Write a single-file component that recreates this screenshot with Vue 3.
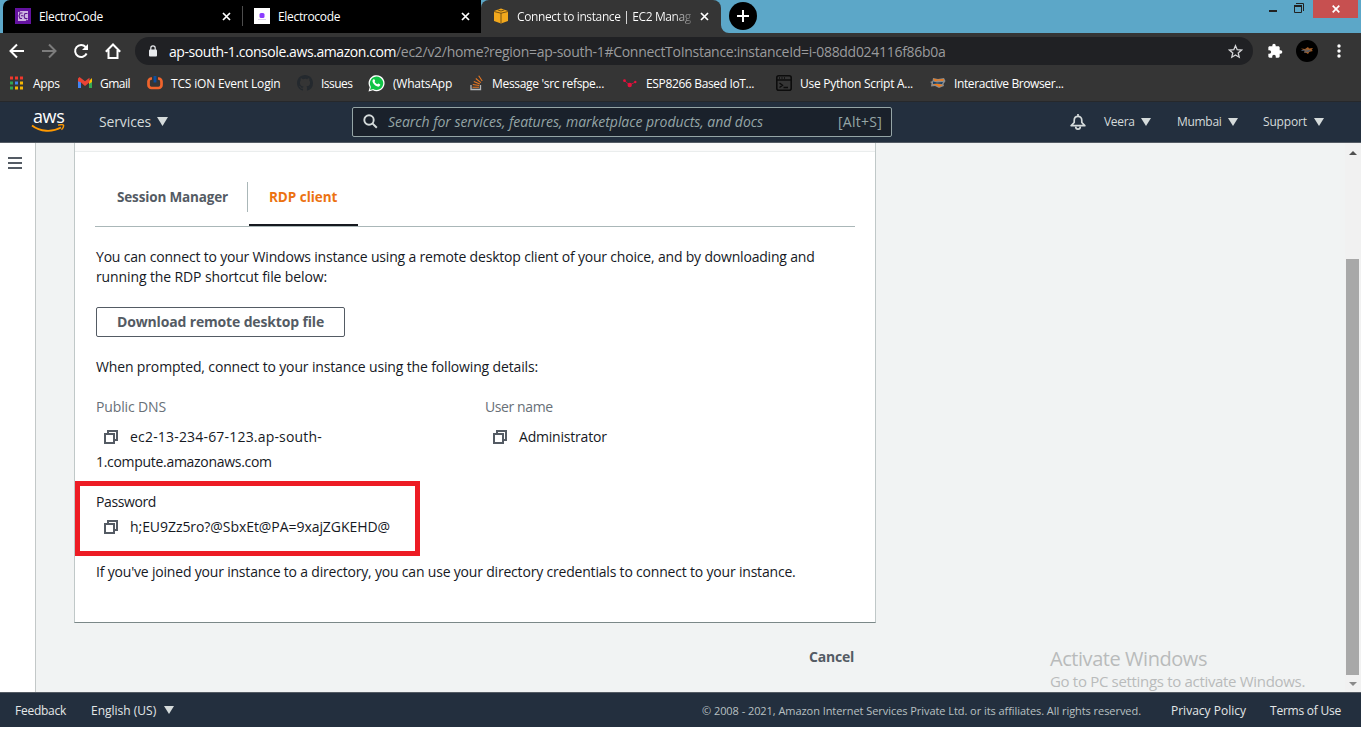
<script setup>
const menus = [
  { name: 'Veera', cls: 'm-user' },
  { name: 'Mumbai', cls: 'm-region' },
  { name: 'Support', cls: 'm-support' },
]
</script>

<template>
  <div class="screen">
    <div class="tabstrip">
      <div class="tab t1">
        <svg class="fav" width="16" height="16" viewBox="0 0 16 16"><rect width="16" height="16" fill="#6412a0" /><rect x="3" y="3" width="10" height="10" fill="#cdb2e0" /><path d="M7.500 5H5L4 8l1 2.500h2M6 7.700h2M12.500 5.500H10L9 8l1 2.500h2.500M3 3l2 1M11 12l2 1" fill="none" stroke="#5a148c" stroke-width="1.100" /></svg>
        <span class="tt tt1">ElectroCode</span>
        <svg class="x" width="9" height="9" viewBox="0 0 9 9"><path d="M1 1l7 7M8 1L1 8" /></svg>
      </div>
      <i class="sep"></i>
      <div class="tab t2">
        <svg class="fav" width="16" height="16" viewBox="0 0 16 16"><rect width="16" height="16" fill="#fff" /><rect x="5.500" y="5" width="5" height="5" rx="1.500" fill="#8b3dff" /><path d="M4 11.500h8" stroke="#dccdf0" /></svg>
        <span class="tt tt1">Electrocode</span>
        <svg class="x" width="9" height="9" viewBox="0 0 9 9"><path d="M1 1l7 7M8 1L1 8" /></svg>
      </div>
      <div class="tab t3">
        <svg class="fav" width="16" height="16" viewBox="0 0 16 16"><path d="M1 3l7-2.500L15 3v10l-7 2.500L1 13z" fill="#f2a81d" /><path d="M1 3.500l7 1.700 7-1.700M8 5v10M4.500 1.800L8 3l3.500-1.200" fill="none" stroke="#6b4a12" stroke-width=".9" /></svg>
        <span class="tt tt3">Connect to instance | EC2 Manag</span>
        <svg class="x" width="9" height="9" viewBox="0 0 9 9"><path d="M1 1l7 7M8 1L1 8" /></svg>
      </div>
      <svg class="flare" width="8" height="8"><path d="M0 0a8 8 0 0 0 8 8H0z" fill="#353535" /></svg>
      <div class="newtab"><svg width="12" height="12" viewBox="0 0 12 12"><path d="M6 0v12M0 6h12" stroke="#fff" stroke-width="2" /></svg></div>
      <div class="winctl">
        <svg class="min" width="8" height="2"><rect width="8" height="2" fill="#222" /></svg>
        <svg class="max" width="10" height="10" viewBox="0 0 10 10"><path d="M2 .5h7.500V8" fill="none" stroke="#222" /><path d="M.5 3h7v6.500h-7z" fill="none" stroke="#222" /><path d="M0 3h8" stroke="#222" stroke-width="2" /></svg>
        <div class="close"><svg width="8" height="8" viewBox="0 0 8 8"><path d="M.7.700l6.600 6.600M7.300.700L.7 7.300" stroke="#fff" stroke-width="1.700" /></svg></div>
      </div>
    </div>

    <div class="toolbar">
      <svg class="nv" width="16" height="16" viewBox="0 0 16 16"><path d="M15 8H2M8 1.500L1.500 8 8 14.500" fill="none" stroke="#fff" stroke-width="2" /></svg>
      <svg class="nv" width="16" height="16" viewBox="0 0 16 16"><path d="M1 8h13M8 1.500L14.500 8 8 14.500" fill="none" stroke="#7c7c7c" stroke-width="2" /></svg>
      <svg class="nv" width="16" height="16" viewBox="0 0 16 16"><path d="M13.600 10.500A6 6 0 1 1 12.600 4" fill="none" stroke="#fff" stroke-width="2" /><path d="M15 1v6H9z" fill="#fff" /></svg>
      <svg class="nv" width="16" height="16" viewBox="0 0 16 16"><path d="M3.500 7v8h9V7M0.800 8.700L8 1.500l7.200 7.200" fill="none" stroke="#fff" stroke-width="2" /></svg>
      <div class="omni">
        <svg width="8" height="12" viewBox="0 0 8 12"><rect y="4.500" width="8" height="7" rx="1" fill="#e8eaed" /><path d="M1.800 5V3a2.200 2.200 0 0 1 4.400 0v2" fill="none" stroke="#e8eaed" stroke-width="1.200" /></svg>
        <span class="host">ap-south-1.console.aws.amazon.com</span><span class="path">/ec2/v2/home?region=ap-south-1#ConnectToInstance:instanceId=i-088dd024116f86b0a</span>
        <svg class="star" width="15" height="15" viewBox="0 0 15 15"><path d="M7.500 1.700l1.700 4 4.300.4-3.300 2.800 1 4.300-3.700-2.300-3.700 2.300 1-4.300L1.500 6.100l4.300-.4z" fill="none" stroke="#d5d6d8" stroke-width="1.300" /></svg>
      </div>
      <svg class="puzzle" width="16" height="16" viewBox="0 0 24 24"><path d="M20.500 11H19V7c0-1.100-.9-2-2-2h-4V3.500a2.500 2.500 0 0 0-5 0V5H4c-1.100 0-2 .9-2 2v3.800h1.500a2.700 2.700 0 0 1 0 5.400H2V20c0 1.100.9 2 2 2h3.800v-1.500a2.700 2.700 0 0 1 5.400 0V22H17c1.100 0 2-.9 2-2v-4h1.500a2.500 2.500 0 0 0 0-5z" fill="#fff" /></svg>
      <svg class="avatar" width="22" height="22" viewBox="0 0 22 22"><circle cx="11" cy="11" r="11" fill="#000" /><path d="M5 8.500l4 .5 3-2 1 1.500 4-.5-1.500 2L17 11l-3.500.7L12 14l-1.500-1L8 12.500 9 11z" fill="#a95f24" /><path d="M5.500 10.500l4-.5 5 .5M8 12l5-.5" fill="none" stroke="#4a5c70" /></svg>
      <svg class="dots" width="4" height="14" viewBox="0 0 4 14"><g fill="#fff"><circle cx="2" cy="2" r="1.700" /><circle cx="2" cy="7" r="1.700" /><circle cx="2" cy="12" r="1.700" /></g></svg>
    </div>

    <div class="bookmarks">
      <div class="bm b1"><svg width="14" height="14" viewBox="0 0 14 14"><path d="M0 .5h3v3H0zM5 .5h3v3H5zM10 .5h3v3h-3z" fill="#f0382c" /><path d="M0 5.500h3v3H0zM0 10.500h3v3H0z" fill="#2fa552" /><path d="M5 5.500h3v3H5z" fill="#3f83ee" /><path d="M10 5.500h3v3h-3zM5 10.500h3v3H5zM10 10.500h3v3h-3z" fill="#f6b704" /></svg><span>Apps</span></div>
      <div class="bm b2"><svg width="16" height="12" viewBox="0 0 16 12"><path d="M1 2v9h3V4z" fill="#4285f4" /><path d="M12 4v7h3V2z" fill="#34a853" /><path d="M12 4l3-3v4l-3 2z" fill="#fbbc04" /><path d="M1 1.500L2.500 0 8 4.300 12.500.8v4.500L8 9 4 5.500 1 4.200z" fill="#ea4335" /></svg><span>Gmail</span></div>
      <div class="bm b3"><svg width="16" height="14" viewBox="0 0 16 14"><path d="M5 2.500H4.500a3 3 0 0 0-3 3V9a3 3 0 0 0 3 3h7a3 3 0 0 0 3-3V5.500a3 3 0 0 0-3-3H11" fill="none" stroke="#f0642c" stroke-width="2.700" /><path d="M8 0v6.500" stroke="#0b4ea2" stroke-width="2.800" /></svg><span>TCS iON Event Login</span></div>
      <div class="bm b4"><svg width="16" height="16" viewBox="0 0 16 16"><path fill="#24292e" d="M8 0C3.580 0 0 3.580 0 8c0 3.540 2.290 6.530 5.470 7.590.4.070.550-.170.550-.380 0-.190-.010-.820-.010-1.490-2.010.370-2.530-.490-2.690-.940-.090-.230-.480-.940-.820-1.130-.280-.150-.680-.520-.010-.530.630-.010 1.080.580 1.230.820.720 1.210 1.870.870 2.330.660.070-.520.280-.870.510-1.070-1.780-.2-3.640-.890-3.640-3.950 0-.870.310-1.590.820-2.150-.080-.2-.360-1.020.080-2.120 0 0 .670-.210 2.200.820A7.600 7.600 0 0 1 8 3.870c.680 0 1.360.090 2 .270 1.530-1.040 2.200-.820 2.200-.820.440 1.100.160 1.920.080 2.120.510.560.820 1.270.820 2.150 0 3.070-1.870 3.750-3.650 3.950.290.250.540.730.540 1.480 0 1.070-.010 1.930-.010 2.200 0 .210.150.460.550.380A8 8 0 0 0 16 8c0-4.420-3.580-8-8-8z" /></svg><span>Issues</span></div>
      <div class="bm b5"><svg width="17" height="17" viewBox="0 0 17 17"><path d="M.5 16.500l1.200-4.200A8 8 0 1 1 4.900 15.300z" fill="#fff" /><path d="M2 15l.9-3.100A6.700 6.700 0 1 1 5.200 14.100z" fill="#10c446" /><path d="M5.200 4.500c1-.8 1.400-.3 2 1.500-.7.800-.7.900 0 1.700.8.900 1.400 1.400 2.200 1.600.7-.9 1-1 2.800.3.300.4-.4 1.700-1.300 2-1.700.5-5-1.700-6.200-4.400-.4-1-.2-2 .5-2.700z" fill="#fff" /></svg><span>(WhatsApp</span></div>
      <div class="bm b6"><svg width="13" height="16" viewBox="0 0 13 16"><path d="M1 10v4.500h9.500V10" fill="none" stroke="#b4b7ba" stroke-width="1.300" /><path d="M2.500 12.300h6.500M2.800 9.500l6.400 1M3.800 6.500l6 2.600M5.800 3.500l5 4.100M8.700.800l3.500 5.200" stroke="#e87722" stroke-width="1.100" /></svg><span>Message 'src refspe...</span></div>
      <div class="bm b7"><svg width="14" height="9" viewBox="0 0 14 9"><path d="M1.500 1.700L6.500 6 12.500 3" fill="none" stroke="#b8143a" /><g fill="#e8103c"><circle cx="1.500" cy="1.700" r="1.400" /><circle cx="6.700" cy="6" r="2.200" /><circle cx="12.300" cy="3" r="1.200" /></g></svg><span>ESP8266 Based IoT...</span></div>
      <div class="bm b8"><svg width="16" height="16" viewBox="0 0 16 16"><rect x=".8" y=".8" width="14.400" height="14.400" rx="2" fill="none" stroke="#0c0c0c" stroke-width="1.600" /><path d="M1 5h14M3.500 8l3 2.300-3 2.200M7.500 12.500h4.500M3 3h1M5.500 3h1M8 3h1" fill="none" stroke="#0c0c0c" stroke-width="1.400" /></svg><span>Use Python Script A...</span></div>
      <div class="bm b9"><svg width="16" height="12" viewBox="0 0 16 12"><path d="M3 1l5 1 6-1 1.500 3-2 3 .5 2-5 2-4-2-4 .5L1.500 6 0 5l2.500-1z" fill="#8b8d8e" /><path d="M3 1.500l4 1L14 2l-1 2-5-.5-3 1zM2 7l4-.5 7 1.500-4 2-2-1.500z" fill="#ee7b1c" /><path d="M3 4.500l4 1 6-.5-1 2-5-.5-4 .5z" fill="#173e63" /></svg><span>Interactive Browser...</span></div>
    </div>

    <header class="nav">
      <div class="aws"><b>aws</b><svg width="34" height="9" viewBox="0 0 34 9"><path d="M1 1.500C9 7.800 21 8.500 30 3.500" fill="none" stroke="#f90" stroke-width="1.800" /><path d="M27 1.200c3-.8 5-.7 5.500-.1.300.8-.5 3.300-2 4.700" fill="none" stroke="#f90" stroke-width="1.300" /></svg></div>
      <div class="services">Services<svg width="11" height="9"><path d="M0 0h11L5.500 9z" fill="#d5dbdb" /></svg></div>
      <div class="search">
        <svg width="15" height="15" viewBox="0 0 15 15"><circle cx="6" cy="6" r="4.700" fill="none" stroke="#d5dbdb" stroke-width="1.900" /><path d="M9.400 9.400l4.400 4.400" stroke="#d5dbdb" stroke-width="2" /></svg>
        <span class="ph">Search for services, features, marketplace products, and docs</span>
        <span class="key">[Alt+S]</span>
      </div>
      <svg class="bell" width="16" height="17" viewBox="0 0 16 17"><path d="M8 0v2M1.200 11.700h13.600L11.800 8.500V6.500C11.800 4 10.500 2.300 8 2.300S4.200 4 4.200 6.500v2z" fill="none" stroke="#d5dbdb" stroke-width="1.700" stroke-linejoin="round" /><path d="M5.700 12.500a2.300 2.700 0 0 0 4.600 0" fill="none" stroke="#d5dbdb" stroke-width="1.700" /></svg>
      <div v-for="m in menus" :key="m.name" class="menu" :class="m.cls">{{ m.name }}<svg width="10" height="8"><path d="M0 0h10L5 8z" fill="#d5dbdb" /></svg></div>
    </header>

    <div class="body">
      <aside class="side"><svg width="14" height="12"><path d="M0 1h14M0 6h14M0 11h14" stroke="#545b64" stroke-width="2" /></svg></aside>
      <main class="main">
        <section class="card">
          <div class="cardtop"></div>
          <div class="cardin">
            <div class="tabs">
              <div class="ctab sm">Session Manager</div>
              <i class="vline"></i>
              <div class="ctab rdp">RDP client</div>
            </div>
            <p class="intro"><span class="l1">You can connect to your Windows instance using a remote desktop client of your choice, and by downloading and</span><br><span class="l2">running the RDP shortcut file below:</span></p>
            <div class="btn">Download remote desktop file</div>
            <p class="prompt">When prompted, connect to your instance using the following details:</p>
            <div class="details">
              <div>
                <div class="label">Public DNS</div>
                <div class="val"><svg class="copy" width="14" height="14"><path d="M4 4V1h9v9h-3M1 4h9v9H1z" fill="none" stroke="#545b64" stroke-width="2" /></svg><span class="v1">ec2-13-234-67-123.ap-south-</span></div>
                <div class="val v2">1.compute.amazonaws.com</div>
              </div>
              <div>
                <div class="label un">User name</div>
                <div class="val"><svg class="copy" width="14" height="14"><path d="M4 4V1h9v9h-3M1 4h9v9H1z" fill="none" stroke="#545b64" stroke-width="2" /></svg><span class="v3">Administrator</span></div>
              </div>
            </div>
            <div class="pw">Password</div>
            <div class="val pwv"><svg class="copy" width="14" height="14"><path d="M4 4V1h9v9h-3M1 4h9v9H1z" fill="none" stroke="#545b64" stroke-width="2" /></svg><span class="v4">h;EU9Zz5ro?@SbxEt@PA=9xajZGKEHD@</span></div>
            <p class="joined">If you've joined your instance to a directory, you can use your directory credentials to connect to your instance.</p>
          </div>
          <div class="mark"></div>
        </section>
        <div class="cancel">Cancel</div>
        <div class="watermark"><div class="w1">Activate Windows</div><div class="w2">Go to PC settings to activate Windows.</div></div>
      </main>
      <div class="scroll">
        <svg width="8" height="4"><path d="M0 4h8L4 0z" fill="#505050" /></svg>
        <i class="thumb"></i>
        <svg width="8" height="4"><path d="M0 0h8L4 4z" fill="#8a8a8a" /></svg>
      </div>
    </div>

    <footer class="foot">
      <span class="f1">Feedback</span>
      <span class="f2">English (US)<svg width="10" height="8"><path d="M0 0h10L5 8z" fill="#d5dbdb" /></svg></span>
      <span class="f3">© 2008 - 2021, Amazon Internet Services Private Ltd. or its affiliates. All rights reserved.</span>
      <span class="f4">Privacy Policy</span>
      <span class="f5">Terms of Use</span>
    </footer>
  </div>
</template>

<style>
body { background: #fff; overflow: hidden; }
</style>
<style scoped>
.screen { width: 1361px; height: 727px; display: flex; flex-direction: column; font-family: "Open Sans", "Noto Sans", sans-serif; font-size: 14px; white-space: nowrap; overflow: hidden; }
.screen * { box-sizing: border-box; }
svg { display: block; flex: none; }
p { margin: 0; }

.tabstrip { height: 33px; background: #5ca7c8; display: flex; flex: none; }
.tab { height: 33px; display: flex; align-items: center; color: #fff; font-size: 12px; }
.t1 { width: 239px; margin-left: 3px; background: #000; border-radius: 7px 0 0 0; padding: 0 11px 1px 12px; }
.sep { width: 1px; background: #000; position: relative; }
.sep::after { content: ""; position: absolute; top: 6px; height: 20px; width: 1px; background: #4d4d4d; }
.t2 { width: 238px; background: #000; padding: 0 11px 1px 11px; }
.t3 { width: 240px; background: #353535; border-radius: 8px 8px 0 0; padding: 0 12px 1px 12px; }
.fav { margin-right: 8px; }
.tt1 { letter-spacing: -.32px; }
.tt3 { letter-spacing: -.385px; background: linear-gradient(90deg, #fff 90%, #666 100%); -webkit-background-clip: text; background-clip: text; color: transparent; }
.x { margin-left: auto; }
.x path { stroke: #fff; stroke-width: 1.7; fill: none; }
.flare { align-self: flex-end; }
.newtab { width: 28px; height: 28px; border-radius: 50%; background: #000; margin-top: 2px; display: flex; align-items: center; justify-content: center; }
.winctl { margin-left: auto; display: flex; height: 18px; }
.min { margin: 10px 17px 0 0; }
.max { margin: 3px 9px 0 0; }
.close { width: 45px; height: 18px; background: #c75050; display: flex; align-items: center; justify-content: center; margin-right: 3px; }

.toolbar { height: 35px; flex: none; background: #353535; display: flex; align-items: center; padding: 1px 0 0 9px; }
.nv { margin-right: 16px; }
.omni { width: 1118px; height: 28px; margin-left: -2px; border-radius: 14px; background: #202124; display: flex; align-items: center; padding: 0 10px 0 14px; }
.host { color: #fff; letter-spacing: -.424px; margin-left: 12px; }
.path { color: #9a9b9d; letter-spacing: -.293px; }
.star { margin-left: auto; }
.puzzle { margin-left: 14px; }
.avatar { margin-left: 13px; }
.dots { margin-left: 19px; }

.bookmarks { height: 34px; flex: none; background: #353535; border-bottom: 1px solid #26282b; display: flex; align-items: center; padding: 0 0 3px 10px; font-size: 12px; color: #fff; letter-spacing: -.3px; }
.bm { display: flex; align-items: center; flex: none; }
.b1 { width: 67px; gap: 9px; } .b2 { width: 70px; gap: 7px; letter-spacing: -.5px; }
.b3 { width: 150px; gap: 8px; letter-spacing: -.18px; } .b4 { width: 71px; gap: 8px; letter-spacing: -.55px; }
.b5 { width: 102px; gap: 8px; letter-spacing: -.21px; } .b6 { width: 153px; gap: 9px; letter-spacing: -.32px; }
.b7 { width: 153px; gap: 9px; letter-spacing: -.35px; } .b8 { width: 154px; gap: 8px; letter-spacing: -.27px; }
.b9 { gap: 8px; letter-spacing: -.4px; }

.nav { height: 41px; flex: none; background: #232f3e; border-bottom: 1px solid #545b64; display: flex; align-items: center; color: #d5dbdb; padding-left: 31px; }
.aws { width: 68px; height: 26px; color: #fff; }
.aws b { display: block; font-size: 18px; line-height: 14px; font-weight: 500; letter-spacing: -.4px; padding-left: 2px; }
.aws svg { margin-top: 1px; }
.services { width: 253px; display: flex; align-items: center; gap: 6px; letter-spacing: -.13px; padding-bottom: 1px; }
.search { width: 540px; height: 30px; border: 1px solid #95a5a6; border-radius: 2px; background: #1a212b; display: flex; align-items: center; padding: 0 9px 1px 10px; color: #95a5a6; }
.ph { font-style: italic; margin-left: 10px; letter-spacing: -.047px; }
.key { margin-left: auto; letter-spacing: .25px; }
.bell { margin-left: 178px; margin-right: 18px; }
.menu { display: flex; align-items: center; font-size: 12px; font-weight: 500; letter-spacing: -.3px; gap: 6px; padding-bottom: 1px; }
.m-user { width: 73px; } .m-region { width: 86px; } .m-support { letter-spacing: -.18px; gap: 7px; }

.body { height: 549px; flex: none; display: flex; background: #f1f3f3; }
.side { width: 36px; background: #fff; border-right: 1px solid #c3c8c8; padding: 14px 0 0 8px; }
.main { width: 1309px; position: relative; }
.card { position: relative; margin-left: 38px; width: 802px; height: 480px; background: #fff; border: 1px solid #c0c8c8; border-top: 0; border-bottom-color: #7b8888; }
.cardtop { height: 9px; background: #fafafa; border-bottom: 1px solid #eaeded; }
.cardin { padding: 0 20px 0 21px; color: #16191f; line-height: 20px; }
.tabs { height: 75px; margin-left: -1px; border-bottom: 1px solid #aab7b8; display: flex; font-weight: 700; color: #545b64; }
.ctab { padding-top: 35px; font-size: 13.5px; }
.sm { width: 152px; padding-left: 22px; letter-spacing: -.155px; }
.vline { width: 1px; height: 30px; background: #aab7b8; margin: 30px 1px 0 0; }
.rdp { width: 109px; height: 74px; padding-left: 20px; color: #ec7211; letter-spacing: -.04px; border-bottom: 2px solid #16191f; }
.intro { margin-top: 20px; }
.l1 { letter-spacing: -.188px; } .l2 { letter-spacing: -.118px; }
.btn { margin-top: 20px; width: 249px; height: 30px; border: 1px solid #545b64; border-radius: 2px; color: #545b64; font-weight: 700; line-height: 28px; padding-left: 20px; letter-spacing: -.156px; }
.prompt { margin-top: 20px; letter-spacing: -.146px; }
.details { margin-top: 20px; display: grid; grid-template-columns: 389px 1fr; height: 77px; }
.label { color: #687078; letter-spacing: -.136px; margin-bottom: 7px; }
.un { letter-spacing: -.4px; }
.val { height: 25px; line-height: 25px; display: flex; align-items: center; }
.copy { margin: 1px 12px 0 8px; }
.v1 { letter-spacing: .188px; } .v2 { letter-spacing: -.3px; } .v3 { letter-spacing: -.2px; } .v4 { letter-spacing: -.061px; }
.pw { margin-top: 18px; letter-spacing: -.388px; }
.pwv { margin-top: 2px; }
.joined { margin-top: 23px; letter-spacing: -.192px; }
.mark { position: absolute; left: 0; top: 338px; width: 345px; height: 75px; border: 5px solid #ed1c24; }
.cancel { margin: 24px 0 0 773px; line-height: 20px; font-weight: 700; color: #545b64; letter-spacing: -.22px; }
.watermark { position: absolute; left: 1014px; top: 502px; color: #b9bbbb; }
.w1 { font-size: 20px; line-height: 28px; letter-spacing: -.446px; }
.w2 { font-size: 15px; line-height: 16px; letter-spacing: -.317px; }
.scroll { width: 16px; background: #f1f1f1; display: flex; flex-direction: column; align-items: center; padding: 8px 1px 0 0; }
.thumb { width: 13px; height: 416px; margin: 104px 0 7px; background: #a8a8a8; }

.foot { height: 35px; flex: none; background: #232f3e; border-top: 1px solid #545b64; display: flex; align-items: center; color: #e3e7e7; font-size: 12px; padding: 1px 0 0 15px; }
.f1 { width: 76px; letter-spacing: -.26px; }
.f2 { width: 611px; display: flex; align-items: center; gap: 8px; padding-bottom: 1px; }
.f3 { width: 469px; font-size: 11px; letter-spacing: -.057px; color: #b8c0c2; padding-bottom: 1px; }
.f4 { width: 99px; } .f5 { letter-spacing: -.23px; }
</style>
